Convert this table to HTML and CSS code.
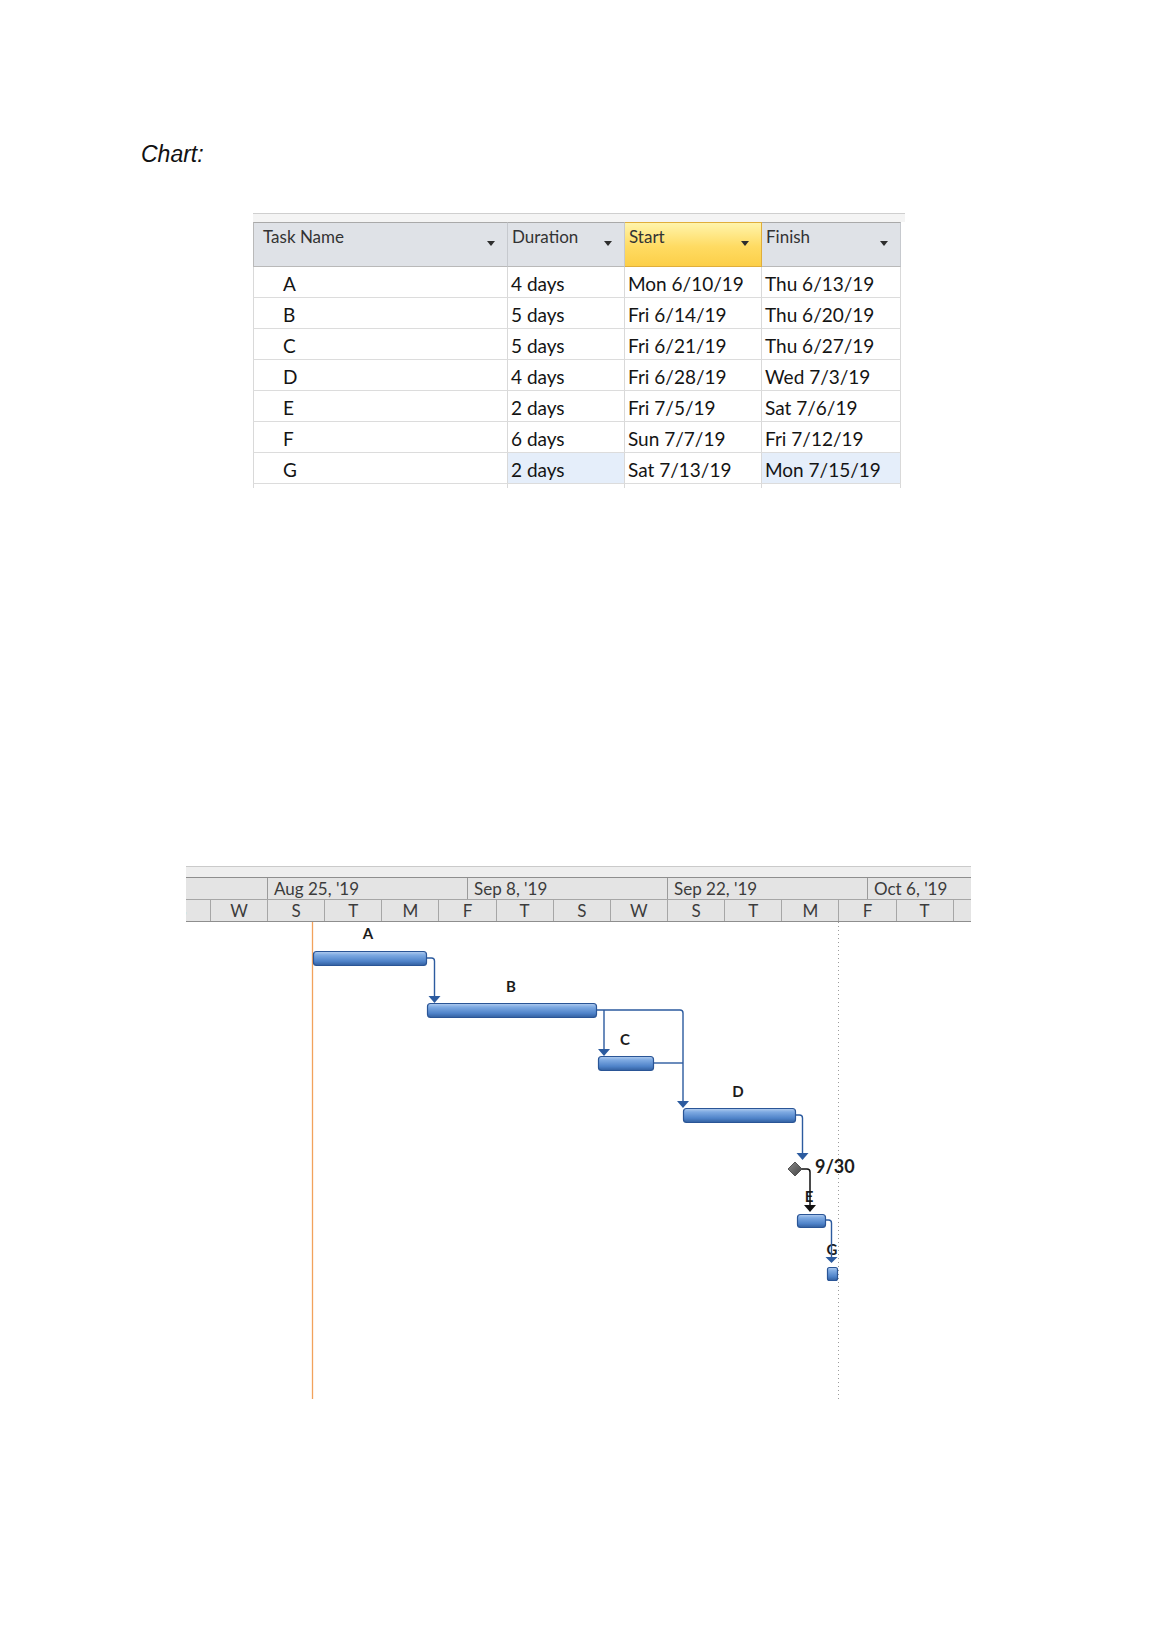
FILE: index.html
```html
<!DOCTYPE html>
<html lang="en">
<head>
<meta charset="utf-8">
<title>Chart</title>
<link rel="stylesheet" href="styles.css">
</head>
<body>
<main class="page">
  <p class="caption">Chart:</p>

  <section class="sheet">
    <div class="sheet-strip"></div>
    <div class="grid">
      <div class="hcell name"><span>Task Name</span><i class="dd"></i></div>
      <div class="hcell"><span>Duration</span><i class="dd"></i></div>
      <div class="hcell sel"><span>Start</span><i class="dd"></i></div>
      <div class="hcell"><span>Finish</span><i class="dd"></i></div>

      <div class="cell name">A</div><div class="cell">4 days</div><div class="cell">Mon 6/10/19</div><div class="cell">Thu 6/13/19</div>
      <div class="cell name">B</div><div class="cell">5 days</div><div class="cell">Fri 6/14/19</div><div class="cell">Thu 6/20/19</div>
      <div class="cell name">C</div><div class="cell">5 days</div><div class="cell">Fri 6/21/19</div><div class="cell">Thu 6/27/19</div>
      <div class="cell name">D</div><div class="cell">4 days</div><div class="cell">Fri 6/28/19</div><div class="cell">Wed 7/3/19</div>
      <div class="cell name">E</div><div class="cell">2 days</div><div class="cell">Fri 7/5/19</div><div class="cell">Sat 7/6/19</div>
      <div class="cell name">F</div><div class="cell">6 days</div><div class="cell">Sun 7/7/19</div><div class="cell">Fri 7/12/19</div>
      <div class="cell name">G</div><div class="cell hl">2 days</div><div class="cell">Sat 7/13/19</div><div class="cell hl">Mon 7/15/19</div>

      <div class="cell name tail"></div><div class="cell tail"></div><div class="cell tail"></div><div class="cell tail"></div>
    </div>
  </section>

  <section class="gantt">
    <div class="g-strip"></div>
    <div class="tier major">
      <div class="mcell first"></div>
      <div class="mcell">Aug 25, '19</div>
      <div class="mcell">Sep 8, '19</div>
      <div class="mcell">Sep 22, '19</div>
      <div class="mcell">Oct 6, '19</div>
    </div>
    <div class="tier minor">
      <div class="dcell">S</div><div class="dcell">W</div><div class="dcell">S</div><div class="dcell">T</div>
      <div class="dcell">M</div><div class="dcell">F</div><div class="dcell">T</div><div class="dcell">S</div>
      <div class="dcell">W</div><div class="dcell">S</div><div class="dcell">T</div><div class="dcell">M</div>
      <div class="dcell">F</div><div class="dcell">T</div><div class="dcell"></div>
    </div>
    <svg class="g-body" width="785" height="477" viewBox="0 0 785 477">
      <defs>
        <linearGradient id="bar" x1="0" y1="0" x2="0" y2="1">
          <stop offset="0" stop-color="#b3cdef"/>
          <stop offset="0.25" stop-color="#7eaae2"/>
          <stop offset="0.7" stop-color="#4f83c9"/>
          <stop offset="1" stop-color="#325f9f"/>
        </linearGradient>
        <linearGradient id="ms" x1="0" y1="0" x2="1" y2="1">
          <stop offset="0" stop-color="#8a8a8a"/>
          <stop offset="1" stop-color="#444444"/>
        </linearGradient>
      </defs>

      <line x1="126.5" y1="0" x2="126.5" y2="477" stroke="#f2a25c" stroke-width="1.3"/>
      <line x1="652.5" y1="0" x2="652.5" y2="477" stroke="#9c9c9c" stroke-width="1" stroke-dasharray="1 3"/>

      <g class="lbl">
        <text x="182" y="17">A</text>
        <text x="325" y="70">B</text>
        <text x="439" y="123">C</text>
        <text x="552" y="175">D</text>
        <text x="623" y="280">E</text>
        <text x="646" y="333">G</text>
      </g>
      <text class="lbl-date" x="629" y="251">9/30</text>

      <g fill="none" stroke="#2c5b9f" stroke-width="1.4">
        <path d="M241,36 H245.5 Q248.5,36 248.5,39 V75"/>
        <path d="M411,88 H494 Q497,88 497,91 V180"/>
        <path d="M418,88 V128"/>
        <path d="M468,141 H497"/>
        <path d="M610,193 H613.5 Q616.5,193 616.5,196 V232"/>
        <path d="M640,298 H642.5 Q645.5,298 645.5,301 V336"/>
      </g>
      <path d="M616,247 H621 Q624,247 624,250 V284" fill="none" stroke="#111" stroke-width="1.5"/>

      <g fill="#2c5b9f">
        <polygon points="242.5,74 254.5,74 248.5,81"/>
        <polygon points="412,127 424,127 418,134"/>
        <polygon points="491,179 503,179 497,186"/>
        <polygon points="610.5,231 622.5,231 616.5,238"/>
        <polygon points="639.5,335 651.5,335 645.5,341"/>
      </g>
      <polygon points="618,283 630,283 624,290" fill="#111"/>

      <g fill="url(#bar)" stroke="#2a5596" stroke-width="1.2">
        <rect x="127.5" y="29.5" width="113" height="14" rx="3"/>
        <rect x="241.5" y="81.5" width="169" height="14" rx="3"/>
        <rect x="412.5" y="134.5" width="55" height="14" rx="3"/>
        <rect x="497.5" y="186.5" width="112" height="14" rx="3"/>
        <rect x="611.5" y="292.5" width="28" height="13" rx="3"/>
        <rect x="641.5" y="345.5" width="10" height="13" rx="2"/>
      </g>
      <polygon points="609,240 616,247 609,254 602,247" fill="url(#ms)" stroke="#3a3a3a" stroke-width="0.8"/>
    </svg>
  </section>
</main>
</body>
</html>
```

FILE: styles.css
```css
* { box-sizing: border-box; }

html, body {
  margin: 0;
  padding: 0;
  background: #ffffff;
}

body {
  width: 1158px;
  min-height: 1638px;
  font-family: Lato, "Open Sans", sans-serif;
}

.page {
  display: flex;
  flex-direction: column;
  align-items: flex-start;
}

.caption {
  margin: 141px 0 0 141px;
  font: italic 23px/26px "Liberation Sans", Arial, sans-serif;
  color: #111111;
}

/* ---------- task sheet ---------- */
.sheet {
  margin: 46px 0 0 253px;
  width: 652px;
}

.sheet-strip {
  height: 9px;
  border-top: 1px solid #cfcfcf;
  background: #f4f4f4;
}

.grid {
  display: grid;
  grid-template-columns: 255px 117px 137px 139px;
}

.hcell {
  height: 45px;
  display: flex;
  justify-content: space-between;
  align-items: flex-start;
  padding: 4px 12px 0 4px;
  border-top: 1px solid #a9a9a9;
  border-bottom: 1px solid #b9b9b9;
  border-right: 1px solid #c6c9ce;
  background: #dfe2e7;
  font-size: 17px;
  line-height: 20px;
  color: #333333;
}

.hcell.name {
  border-left: 1px solid #b9b9b9;
  padding-left: 9px;
}

.hcell.sel {
  background: linear-gradient(#fff4ab, #ffdb62 55%, #fccf48);
  border-top-color: #e0ae3a;
  border-bottom-color: #e0ae3a;
  border-right-color: #e0ae3a;
}

.dd {
  width: 0;
  height: 0;
  margin-top: 14px;
  border-left: 4.5px solid transparent;
  border-right: 4.5px solid transparent;
  border-top: 5px solid #2e2e2e;
}

.cell {
  height: 31px;
  padding: 4px 0 0 3px;
  border-bottom: 1px solid #dcdcdc;
  border-right: 1px solid #d9d9d9;
  font-size: 19px;
  line-height: 25px;
  color: #141414;
  white-space: nowrap;
}

.cell.name {
  border-left: 1px solid #d9d9d9;
  padding-left: 29px;
}

.cell.hl {
  background: #e5eefa;
}

.cell.tail {
  height: 4px;
  padding: 0;
  border-bottom: none;
}

/* ---------- gantt ---------- */
.gantt {
  margin: 378px 0 0 186px;
  width: 785px;
  overflow: hidden;
}

.g-strip {
  height: 11px;
  border-top: 1px solid #cacaca;
  background: #eeeeee;
}

.tier {
  display: flex;
  height: 22px;
  border-top: 1px solid #8e8e8e;
  background: #e4e4e4;
  font-size: 17px;
  line-height: 21px;
  color: #3c3c3c;
  white-space: nowrap;
}

.tier.minor {
  height: 23px;
  margin-left: -32.29px;
  border-top-color: #a6a6a6;
  border-bottom: 1px solid #8e8e8e;
}

.mcell {
  flex: 0 0 200px;
  padding-left: 6px;
  border-right: 1px solid #9a9a9a;
}

.mcell.first {
  flex-basis: 82px;
}

.dcell {
  flex: 0 0 57.142857px;
  text-align: center;
  border-right: 1px solid #a6a6a6;
}

.g-body {
  display: block;
}

.lbl text {
  font: bold 15px Lato, sans-serif;
  fill: #1c1c1c;
  text-anchor: middle;
}

.lbl-date {
  font: bold 18px Lato, sans-serif;
  fill: #1c1c1c;
}
```
